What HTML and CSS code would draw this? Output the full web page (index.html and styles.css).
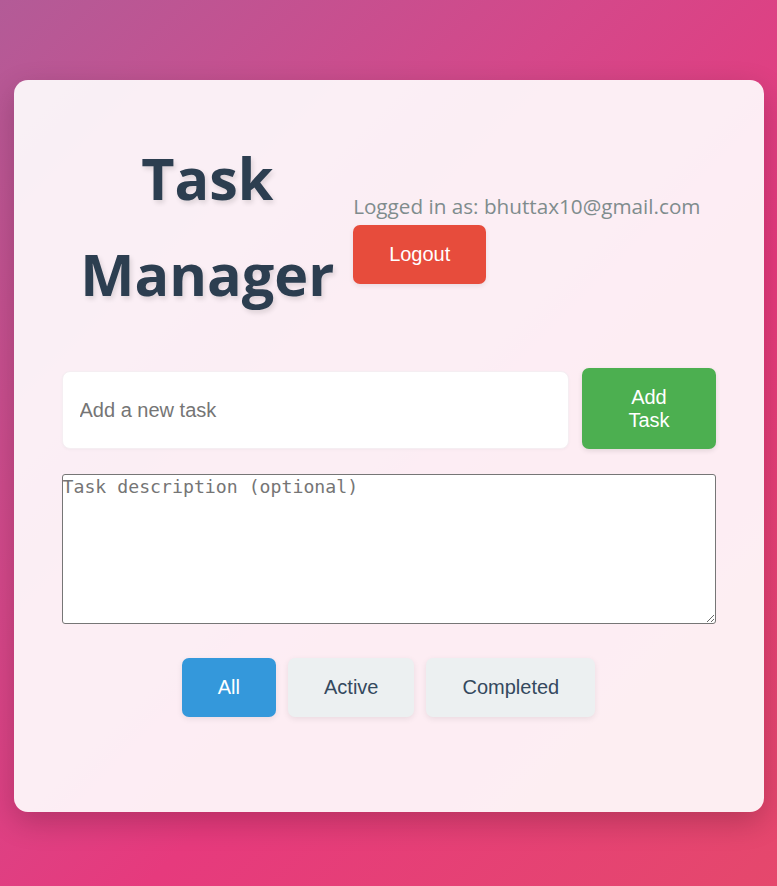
FILE: index.html
```html
<!DOCTYPE html>
<html lang="en">
<head>
<meta charset="utf-8">
<title>Task Manager</title>
<link rel="stylesheet" href="styles.css">
</head>
<body>
<div class="app">
  <header class="header">
    <h1 class="title">Task Manager</h1>
    <div class="user-info">
      <p class="user-email">Logged in as: bhuttax10@gmail.com</p>
      <button class="btn btn-logout">Logout</button>
    </div>
  </header>
  <form class="task-form">
    <div class="input-row">
      <input class="task-input" type="text" placeholder="Add a new task">
      <button class="btn btn-add" type="button">Add Task</button>
    </div>
    <textarea class="task-desc" placeholder="Task description (optional)"></textarea>
  </form>
  <div class="filters">
    <button class="btn filter filter-active">All</button>
    <button class="btn filter">Active</button>
    <button class="btn filter">Completed</button>
  </div>
  <ul class="task-list"></ul>
</div>
</body>
</html>
```
FILE: styles.css
```css
* { box-sizing: border-box; }
html, body { margin: 0; }
body {
  min-height: 886px;
  padding: 80px 0 75px;
  background: linear-gradient(135deg, #b35b97 0%, #d4488a 35%, #e63a7d 62%, #e5486c 100%);
  font-family: "Open Sans", "Noto Sans", sans-serif;
}
.app {
  max-width: 750px;
  margin: 0 auto;
  padding: 48px;
  background: rgba(255, 255, 255, 0.91);
  border-radius: 14px;
  box-shadow: 0 10px 30px rgba(0, 0, 0, 0.2);
}
.header {
  display: flex;
  align-items: center;
  margin-bottom: 38px;
}
.title {
  flex: 1;
  margin: 2px 0 8px;
  text-align: center;
  font-size: 57.5px;
  line-height: 96px;
  font-weight: 700;
  color: #2c3e50;
  text-shadow: 2px 3px 5px rgba(0, 0, 0, 0.12);
}
.user-info { flex: none; margin: 18px 15px 0 0; }
.user-email {
  margin: 0 0 5px;
  font-size: 20.7px;
  line-height: 27px;
  color: #7f8c8d;
}
.btn {
  border: none;
  border-radius: 7px;
  font-family: "Liberation Sans", Arial, sans-serif;
  font-size: 20px;
  line-height: 23px;
  color: #fff;
  cursor: pointer;
}
.btn-logout {
  padding: 18px 36px;
  background: #e74c3c;
  box-shadow: 0 2px 5px rgba(0, 0, 0, 0.08);
}
.input-row {
  display: flex;
  align-items: flex-end;
  gap: 13px;
}
.task-input {
  flex: 1 1 auto;
  min-width: 0;
  height: 78px;
  padding: 0 17px;
  border: 1px solid #f5eef2;
  border-radius: 8px;
  background: #fff;
  font-family: "Liberation Sans", Arial, sans-serif;
  font-size: 20px;
  color: #333;
  box-shadow: 0 1px 3px rgba(0, 0, 0, 0.03);
  outline: none;
}
.task-input::placeholder { color: #757575; }
.btn-add {
  flex: none;
  width: min-content;
  padding: 17px 46px;
  height: 81px;
  background: #4caf50;
  box-shadow: 0 2px 5px rgba(0, 0, 0, 0.1);
}
.task-desc {
  display: block;
  width: 100%;
  height: 150px;
  margin-top: 25px;
  padding: 1px 0;
  border: 1px solid #767676;
  border-radius: 3px;
  background: #fff;
  font-family: "DejaVu Sans Mono", "Liberation Mono", monospace;
  font-size: 18.2px;
  line-height: 22px;
  color: #333;
  resize: vertical;
}
.task-desc::placeholder { color: #757575; }
.filters {
  display: flex;
  justify-content: center;
  gap: 12px;
  margin-top: 34px;
}
.filter {
  padding: 18px 36px;
  background: #ecf0f1;
  color: #34495e;
  box-shadow: 0 2px 6px rgba(0, 0, 0, 0.08);
}
.filter-active {
  background: #3498db;
  color: #fff;
}
.task-list {
  list-style: none;
  margin: 47px 0 0;
  padding: 0;
}
```
